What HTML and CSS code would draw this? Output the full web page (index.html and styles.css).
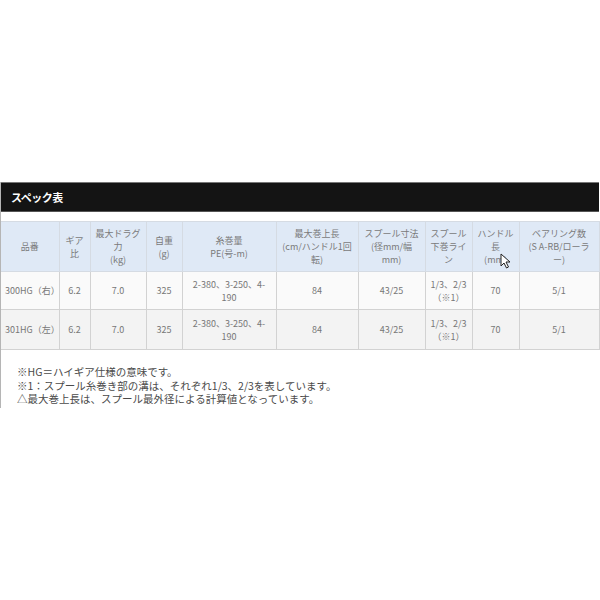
FILE: index.html
```html
<!DOCTYPE html>
<html lang="ja">
<head>
<meta charset="utf-8">
<link rel="stylesheet" href="styles.css">
</head>
<body>
<section class="spec">
  <h2 class="spec-title">スペック表</h2>
  <div class="table-wrap">
    <table class="spec-table">
      <colgroup>
        <col class="c1"><col class="c2"><col class="c3"><col class="c4"><col class="c5">
        <col class="c6"><col class="c7"><col class="c8"><col class="c9"><col class="c10">
      </colgroup>
      <thead>
        <tr>
          <th>品番</th>
          <th>ギア<br>比</th>
          <th>最大ドラグ<br>力<br>(kg)</th>
          <th>自重<br>(g)</th>
          <th>糸巻量<br>PE(号-m)</th>
          <th>最大巻上長<br>(cm/ハンドル1回<br>転)</th>
          <th>スプール寸法<br>(径mm/幅<br>mm)</th>
          <th>スプール<br>下巻ライ<br>ン</th>
          <th class="cursor-cell">ハンドル<br>長<br>(mm)<svg class="cursor" width="11" height="16" viewBox="0 0 11 16"><path d="M1 1 L1 13 L4 10 L6.5 15 L8.5 14 L6 9 L10 9 Z" fill="#fff" stroke="#222" stroke-width="1"/></svg></th>
          <th>ベアリング数<br>(S A-RB/ローラ<br>ー)</th>
        </tr>
      </thead>
      <tbody>
        <tr class="row-a">
          <td class="name">300HG（右）</td>
          <td>6.2</td>
          <td>7.0</td>
          <td>325</td>
          <td>2-380、3-250、4-<br>190</td>
          <td>84</td>
          <td>43/25</td>
          <td>1/3、2/3<br>（※1）</td>
          <td>70</td>
          <td>5/1</td>
        </tr>
        <tr class="row-b">
          <td class="name">301HG（左）</td>
          <td>6.2</td>
          <td>7.0</td>
          <td>325</td>
          <td>2-380、3-250、4-<br>190</td>
          <td>84</td>
          <td>43/25</td>
          <td>1/3、2/3<br>（※1）</td>
          <td>70</td>
          <td>5/1</td>
        </tr>
      </tbody>
    </table>
  </div>
  <div class="notes">
    <p>※HG＝ハイギア仕様の意味です。</p>
    <p>※1：スプール糸巻き部の溝は、それぞれ1/3、2/3を表しています。</p>
    <p>△最大巻上長は、スプール最外径による計算値となっています。</p>
  </div>
</section>
</body>
</html>
```
FILE: styles.css
```css
html, body {
  margin: 0;
  padding: 0;
  background: #fff;
}
body {
  font-family: "Noto Sans CJK JP", "Noto Sans", sans-serif;
  color: #555;
}
.spec {
  margin: 182px 1px 0 0;
  border-left: 1px solid #b5b5b5;
  padding-bottom: 0;
}
.spec-title {
  margin: 0;
  height: 28px;
  border-top: 1px solid #777;
  border-bottom: 1px solid #555;
  background: #141414;
  color: #fff;
  font-size: 11px;
  font-weight: bold;
  letter-spacing: -0.5px;
  display: flex;
  align-items: center;
  padding-left: 10px;
}
.table-wrap {
  padding-top: 9px;
}
.spec-table {
  width: 598px;
  border-collapse: collapse;
  table-layout: fixed;
  font-size: 9px;
  color: #777;
}
.c1 { width: 58px; }
.c2 { width: 31px; }
.c3 { width: 56px; }
.c4 { width: 36px; }
.c5 { width: 94px; }
.c6 { width: 82px; }
.c7 { width: 67px; }
.c8 { width: 47px; }
.c9 { width: 47px; }
.c10 { width: 80px; }
.spec-table th,
.spec-table td {
  border: 1px solid #d2d2d2;
  text-align: center;
  vertical-align: middle;
  padding: 0 2px;
  line-height: 13px;
  font-weight: normal;
}
.spec-table th:first-child,
.spec-table td:first-child {
  border-left: none;
}
.spec-table thead tr {
  height: 50px;
  background: #dfe9f6;
}
.spec-table thead th {
  color: #7a7a7a;
  border-color: #d5dbe3;
}
.row-a { height: 38px; background: #fafafa; }
.row-b { height: 40px; background: #f3f3f3; }
.spec-table td.name {
  text-align: left;
  padding-left: 4px;
}
.cursor-cell {
  position: relative;
}
.cursor {
  position: absolute;
  left: 27px;
  top: 31px;
}
.notes {
  padding: 15px 0 2px 16px;
  font-size: 10.5px;
  line-height: 13.5px;
  color: #4a4a4a;
}
.notes p {
  margin: 0;
}
```
